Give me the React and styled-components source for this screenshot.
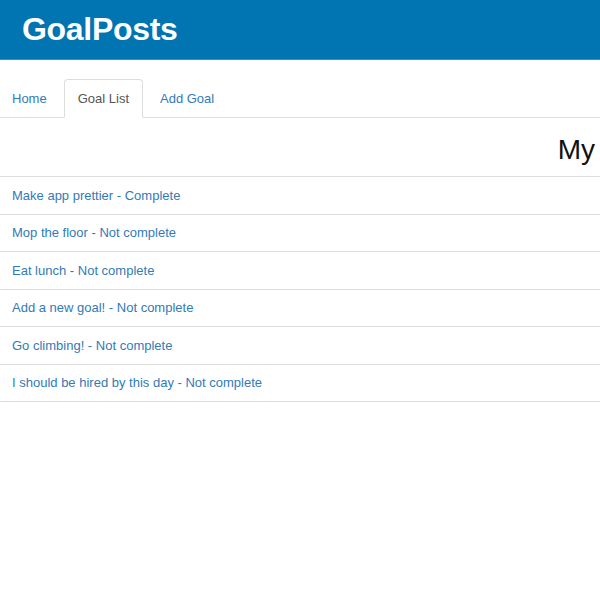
import React from 'react';
import styled, { createGlobalStyle } from 'styled-components';

const GlobalStyle = createGlobalStyle`
  body {
    margin: 0;
    font-family: "Liberation Sans", Arial, sans-serif;
    background: #fff;
    overflow: hidden;
  }
`;

const goals = [
  { text: 'Make app prettier', done: true },
  { text: 'Mop the floor', done: false },
  { text: 'Eat lunch', done: false },
  { text: 'Add a new goal!', done: false },
  { text: 'Go climbing!', done: false },
  { text: 'I should be hired by this day', done: false },
];

const Page = styled.div`
  width: 600px;
  overflow: hidden;
`;

const Header = styled.header`
  height: 59px;
  background: #0174b2;
  border-bottom: 1px solid #3a8fc2;
  display: flex;
  align-items: center;
  padding-left: 22px;
`;

const Brand = styled.h1`
  margin: 0;
  color: #fff;
  font-size: 32px;
  font-weight: bold;
  letter-spacing: -0.3px;
`;

const Tabs = styled.ul`
  list-style: none;
  margin: 19px 0 0;
  padding: 0;
  display: flex;
  border-bottom: 1px solid #ddd;
  height: 38px;
`;

const Tab = styled.li`
  margin-right: 3px;
  margin-bottom: -1px;
  &:first-child {
    margin-left: -2px;
  }
`;

const TabLink = styled.a`
  display: flex;
  align-items: center;
  height: 37px;
  padding: 0 13px;
  font-size: 13px;
  text-decoration: none;
  border: 1px solid ${(p) => (p.active ? '#ddd' : 'transparent')};
  border-bottom-color: ${(p) => (p.active ? '#fff' : 'transparent')};
  border-radius: 4px 4px 0 0;
  background: ${(p) => (p.active ? '#fff' : 'transparent')};
  color: ${(p) => (p.active ? '#555' : '#337ab7')};
`;

const TitleRow = styled.div`
  height: 58px;
  display: flex;
  align-items: center;
  justify-content: flex-end;
  padding: 5px 5px 0 0;
  box-sizing: border-box;
`;

const Title = styled.h2`
  margin: 0;
  font-size: 28px;
  font-weight: normal;
  color: #111;
`;

const List = styled.ul`
  list-style: none;
  margin: 0;
  padding: 0;
  border-top: 1px solid #ddd;
`;

const Item = styled.li`
  height: 36.5px;
  border-bottom: 1px solid #ddd;
  display: flex;
  align-items: center;
  padding-left: 12px;
  font-size: 13px;
  color: #337ab7;
`;

export default function App() {
  return (
    <Page>
      <GlobalStyle />
      <Header>
        <Brand>GoalPosts</Brand>
      </Header>
      <Tabs>
        <Tab><TabLink href="#">Home</TabLink></Tab>
        <Tab><TabLink href="#" active>Goal List</TabLink></Tab>
        <Tab><TabLink href="#">Add Goal</TabLink></Tab>
      </Tabs>
      <TitleRow>
        <Title>My</Title>
      </TitleRow>
      <List>
        {goals.map((g) => (
          <Item key={g.text}>
            {g.text} - {g.done ? 'Complete' : 'Not complete'}
          </Item>
        ))}
      </List>
    </Page>
  );
}
